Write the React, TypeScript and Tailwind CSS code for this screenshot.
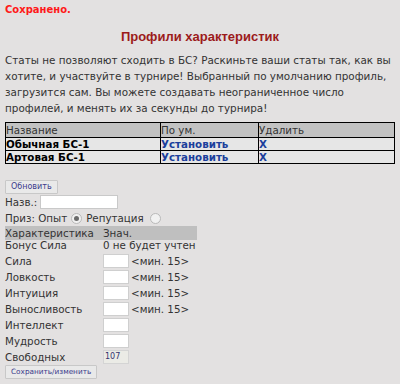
import React from 'react';

const stats = ['Сила', 'Ловкость', 'Интуиция', 'Выносливость'];

const Radio: React.FC<{ checked?: boolean; wide?: boolean }> = ({ checked, wide }) => (
  <span
    className={`${wide ? 'ml-[6px]' : 'ml-1'} inline-flex h-[11px] w-[11px] items-center justify-center rounded-full border border-[#b9b9b9] bg-[#f1f1f1] align-middle`}
  >
    {checked && <span className="h-[5px] w-[5px] rounded-full bg-[#6b6b6b]" />}
  </span>
);

const App: React.FC = () => {
  return (
    <div className="h-[384px] w-[400px] overflow-hidden bg-[#e3e1e1] px-[5px] text-[10.3px] leading-[16px] text-[#333] [font-family:'DejaVu_Sans',Verdana,sans-serif]">
      {/* статус */}
      <div className="pt-[2px] text-[10px] font-bold text-[#ff1a1a]">Сохранено.</div>

      <h1 className="mt-[10px] text-center text-[13px] font-bold leading-[18px] text-[#9c1b1b] [font-family:'Liberation_Sans',Arial,sans-serif]">
        Профили характеристик
      </h1>

      <p className="mt-[6px] text-[10.4px]">
        Статы не позволяют сходить в БС? Раскиньте ваши статы так, как вы хотите, и участвуйте в турнире! Выбранный по
        умолчанию профиль, загрузится сам. Вы можете создавать неограниченное число профилей, и менять их за секунды до
        турнира!
      </p>

      {/* таблица профилей */}
      <table className="mt-[6px] w-[390px] border-collapse border border-black text-[10.3px] leading-[12px]">
        <thead>
          <tr className="bg-[#c2c2c2]">
            <td className="h-[15px] w-[155px] border border-black p-0 font-normal">Название</td>
            <td className="w-[98px] border border-black p-0 font-normal">По ум.</td>
            <td className="border border-black p-0 font-normal">Удалить</td>
          </tr>
        </thead>
        <tbody className="bg-[#e6e6e6] font-bold">
          {['Обычная БС-1', 'Артовая БС-1'].map((name) => (
            <tr key={name}>
              <td className="h-[13px] border border-black p-0 text-black">{name}</td>
              <td className="border border-black p-0 text-[#1c3f9c]">Установить</td>
              <td className="border border-black p-0 text-[#1c3f9c]">X</td>
            </tr>
          ))}
        </tbody>
      </table>

      <button className="mt-[16px] block h-[14px] rounded-[1px] border border-[#c8c8c8] bg-[#e9e9e9] px-[5px] text-[8px] leading-[12px] text-[#3b3b8c]">
        Обновить
      </button>

      {/* форма */}
      <div className="flex h-[16px] items-center">
        <span>Назв.:</span>
        <input className="ml-[3px] h-[14px] w-[78px] border border-[#c9c9c9] bg-white" />
      </div>
      <div className="flex h-[16px] items-center">
        <span>Приз: Опыт</span>
        <Radio checked />
        <span className="ml-[4px]">Репутация</span>
        <Radio wide />
      </div>

      <div className="flex h-[14px] w-[192px] items-center bg-[#bfbfbf] leading-[14px]">
        <span className="w-[98px]">Характеристика</span>
        <span>Знач.</span>
      </div>
      <div className="-mt-[3px] flex h-[16px] items-center">
        <span className="w-[98px]">Бонус Сила</span>
        <span>0 не будет учтен</span>
      </div>
      {stats.map((s) => (
        <div key={s} className="flex h-[16px] items-center">
          <span className="w-[98px]">{s}</span>
          <input className="h-[14px] w-[26px] border border-[#cfcfcf] bg-white" />
          <span className="ml-[2px]">&lt;мин. 15&gt;</span>
        </div>
      ))}
      {['Интеллект', 'Мудрость'].map((s) => (
        <div key={s} className="flex h-[16px] items-center">
          <span className="w-[98px]">{s}</span>
          <input className="h-[14px] w-[26px] border border-[#cfcfcf] bg-white" />
        </div>
      ))}
      <div className="flex h-[16px] items-center">
        <span className="w-[98px]">Свободных</span>
        <span className="flex h-[14px] w-[26px] items-center border border-[#d4d4d4] bg-[#ebebe6] pl-[1px] text-[8px] text-[#33336e]">
          107
        </span>
      </div>
      <button className="block h-[14px] rounded-[1px] border border-[#c8c8c8] bg-[#e9e9e9] px-[5px] text-[7.3px] leading-[12px] text-[#3b3b8c]">
        Сохранить/изменить
      </button>
    </div>
  );
};

export default App;
